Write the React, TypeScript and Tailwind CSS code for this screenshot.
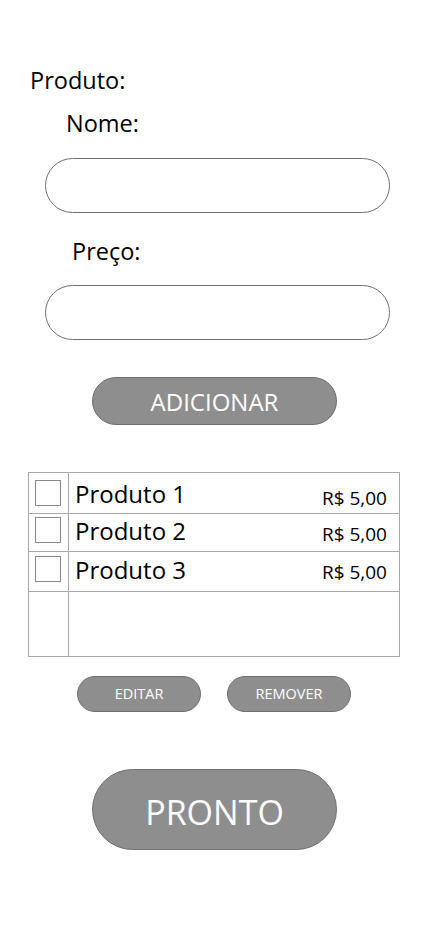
import React from "react";

const font = { fontFamily: '"Open Sans", "Noto Sans", sans-serif' };

function Row({
  name,
  h,
  cbTop,
  nameTop,
  priceTop,
}: {
  name?: string;
  h: string;
  cbTop: string;
  nameTop: string;
  priceTop: string;
}) {
  return (
    <div className={`flex ${h} border-b border-[#a8a8a8]`}>
      <div className={`w-[40px] shrink-0 border-r border-[#a8a8a8] pl-[6px] ${cbTop}`}>
        {name && <div className="w-[26px] h-[26px] border border-[#8a8a8a]" />}
      </div>
      {name && (
        <div className="flex flex-1 justify-between pl-[6px] pr-[12px]">
          <div className={`text-[24px] leading-[30px] text-black ${nameTop}`}>{name}</div>
          <div className={`text-[19px] leading-[24px] text-black ${priceTop}`}>R$ 5,00</div>
        </div>
      )}
    </div>
  );
}

export default function App() {
  return (
    <div className="w-[428px] h-[926px] bg-white" style={font}>
      <div className="pt-[64px]">
        <div className="pl-[30px] text-[23.5px] leading-[32px] text-black">Produto:</div>
        <div className="ml-[66px] mt-[11px] text-[23.5px] leading-[32px] text-black">Nome:</div>
        <div className="ml-[45px] mt-[19px] w-[345px] h-[55px] rounded-full border border-[#707070]" />
        <div className="ml-[72px] mt-[22px] text-[23.5px] leading-[32px] text-black">Preço:</div>
        <div className="ml-[45px] mt-[18px] w-[345px] h-[55px] rounded-full border border-[#707070]" />
        <div className="ml-[92px] mt-[37px] w-[245px] h-[48px] pt-[2px] rounded-full bg-[#8e8e8e] border border-[#707070] flex items-center justify-center text-white text-[24px]">
          ADICIONAR
        </div>
        <div className="ml-[28px] mt-[47px] w-[372px] border-t border-l border-r border-[#a8a8a8]">
          <Row name="Produto 1" h="h-[41px]" cbTop="pt-[7px]" nameTop="pt-[6px]" priceTop="pt-[13px]" />
          <Row name="Produto 2" h="h-[38px]" cbTop="pt-[3px]" nameTop="pt-[2px]" priceTop="pt-[8px]" />
          <Row name="Produto 3" h="h-[40px]" cbTop="pt-[4px]" nameTop="pt-[3px]" priceTop="pt-[8px]" />
          <Row h="h-[65px]" cbTop="" nameTop="" priceTop="" />
        </div>
        <div className="flex ml-[77px] mt-[19px] gap-[26px]">
          <div className="w-[124px] h-[36px] rounded-full bg-[#8e8e8e] border border-[#707070] flex items-center justify-center text-white text-[14.5px]">
            EDITAR
          </div>
          <div className="w-[124px] h-[36px] rounded-full bg-[#8e8e8e] border border-[#707070] flex items-center justify-center text-white text-[14.5px]">
            REMOVER
          </div>
        </div>
        <div className="ml-[92px] mt-[57px] w-[245px] h-[81px] pt-[5px] rounded-full bg-[#8e8e8e] border border-[#707070] flex items-center justify-center text-white text-[34px]">
          PRONTO
        </div>
      </div>
    </div>
  );
}
